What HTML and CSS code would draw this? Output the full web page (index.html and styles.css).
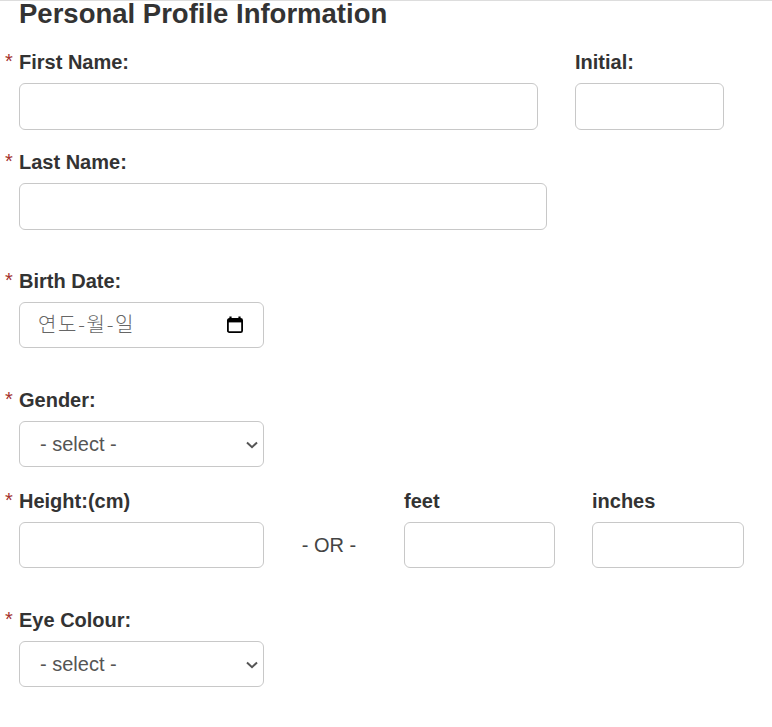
FILE: index.html
```html
<!DOCTYPE html>
<html lang="en">
<head>
  <meta charset="UTF-8">
  <title>Personal Profile Information</title>
  <link rel="stylesheet" href="styles.css">
</head>
<body>
  <form class="profile-form">
    <h2>Personal Profile Information</h2>

    <div class="row row-name">
      <div class="field field-first">
        <label class="required">First Name:</label>
        <input type="text" class="control">
      </div>
      <div class="field field-initial">
        <label>Initial:</label>
        <input type="text" class="control">
      </div>
    </div>

    <div class="row row-last">
      <div class="field field-last">
        <label class="required">Last Name:</label>
        <input type="text" class="control">
      </div>
    </div>

    <div class="row row-birth">
      <div class="field field-short">
        <label class="required">Birth Date:</label>
        <div class="control date-box">
          <span class="date-text">연도-월-일</span>
          <svg class="date-icon" width="20" height="20" viewBox="0 0 20 20">
            <path d="M5.5 1.5v2M14.5 1.5v2" stroke="#000" stroke-width="2.2" fill="none"/>
            <rect x="2.9" y="3.9" width="14.2" height="13.2" rx="1.4" fill="none" stroke="#000" stroke-width="1.8"/>
            <rect x="3" y="4" width="14" height="3.4" fill="#000"/>
          </svg>
        </div>
      </div>
    </div>

    <div class="row row-gender">
      <div class="field field-short">
        <label class="required">Gender:</label>
        <div class="select-wrap">
          <select class="control select-box">
            <option>- select -</option>
          </select>
          <svg class="chevron" width="14" height="8" viewBox="0 0 14 8">
            <path d="M2 1.5L7 6.2L12 1.5" stroke="#555" stroke-width="2" fill="none"/>
          </svg>
        </div>
      </div>
    </div>

    <div class="row row-height">
      <div class="field field-short">
        <label class="required">Height:(cm)</label>
        <input type="text" class="control">
      </div>
      <div class="or-text">- OR -</div>
      <div class="field field-feet">
        <label>feet</label>
        <input type="text" class="control">
      </div>
      <div class="field field-inches">
        <label>inches</label>
        <input type="text" class="control">
      </div>
    </div>

    <div class="row row-eye">
      <div class="field field-short">
        <label class="required">Eye Colour:</label>
        <div class="select-wrap">
          <select class="control select-box">
            <option>- select -</option>
          </select>
          <svg class="chevron" width="14" height="8" viewBox="0 0 14 8">
            <path d="M2 1.5L7 6.2L12 1.5" stroke="#555" stroke-width="2" fill="none"/>
          </svg>
        </div>
      </div>
    </div>
  </form>
</body>
</html>
```

FILE: styles.css
```css
body {
  margin: 0;
  font-family: "Liberation Sans", Arial, sans-serif;
  color: #333;
  background: #fff;
  border-top: 1px solid #ddd;
}
.profile-form {
  padding: 0 0 0 19px;
}
h2 {
  margin: 0;
  font-size: 27.5px;
  line-height: 26px;
  font-weight: bold;
}
.row {
  display: flex;
  align-items: flex-start;
}
.row-name {
  margin-top: 24px;
}
.row-last {
  margin-top: 21px;
}
.row-birth {
  margin-top: 40px;
}
.row-gender {
  margin-top: 41px;
}
.row-height {
  margin-top: 23px;
}
.row-eye {
  margin-top: 41px;
}
.field {
  display: flex;
  flex-direction: column;
}
label {
  display: block;
  font-size: 20px;
  line-height: 23px;
  font-weight: bold;
  margin-bottom: 9px;
  position: relative;
}
.required::before {
  content: "*";
  position: absolute;
  left: -14px;
  top: -1px;
  font-weight: normal;
  color: #a5322e;
}
.control {
  box-sizing: border-box;
  height: 47px;
  width: 100%;
  border: 1px solid #c8c8c8;
  border-radius: 6px;
  background: #fff;
  font-family: inherit;
  font-size: 20px;
  color: #555;
}
.field-first {
  width: 519px;
}
.field-initial {
  width: 149px;
  margin-left: 37px;
}
.field-last {
  width: 528px;
}
.field-short {
  width: 245px;
}
.row-birth .control,
.row-gender .control,
.row-height .control,
.row-eye .control {
  height: 46px;
}
.date-box {
  display: flex;
  align-items: center;
  justify-content: space-between;
  padding: 0 18px;
}
.date-text {
  padding-bottom: 3px;
  font-family: "Noto Sans CJK KR", sans-serif;
  font-size: 20px;
  font-weight: 300;
  letter-spacing: 1.7px;
  color: #666;
}
.select-wrap {
  position: relative;
}
.select-box {
  appearance: none;
  padding: 0 30px 0 20px;
}
.chevron {
  position: absolute;
  right: 5px;
  top: 20px;
  pointer-events: none;
}
.or-text {
  width: 130px;
  padding: 43px 10px 0 0;
  text-align: center;
  font-size: 20px;
  line-height: 24px;
  color: #444;
}
.field-feet {
  width: 151px;
}
.field-inches {
  width: 152px;
  margin-left: 37px;
}
```
